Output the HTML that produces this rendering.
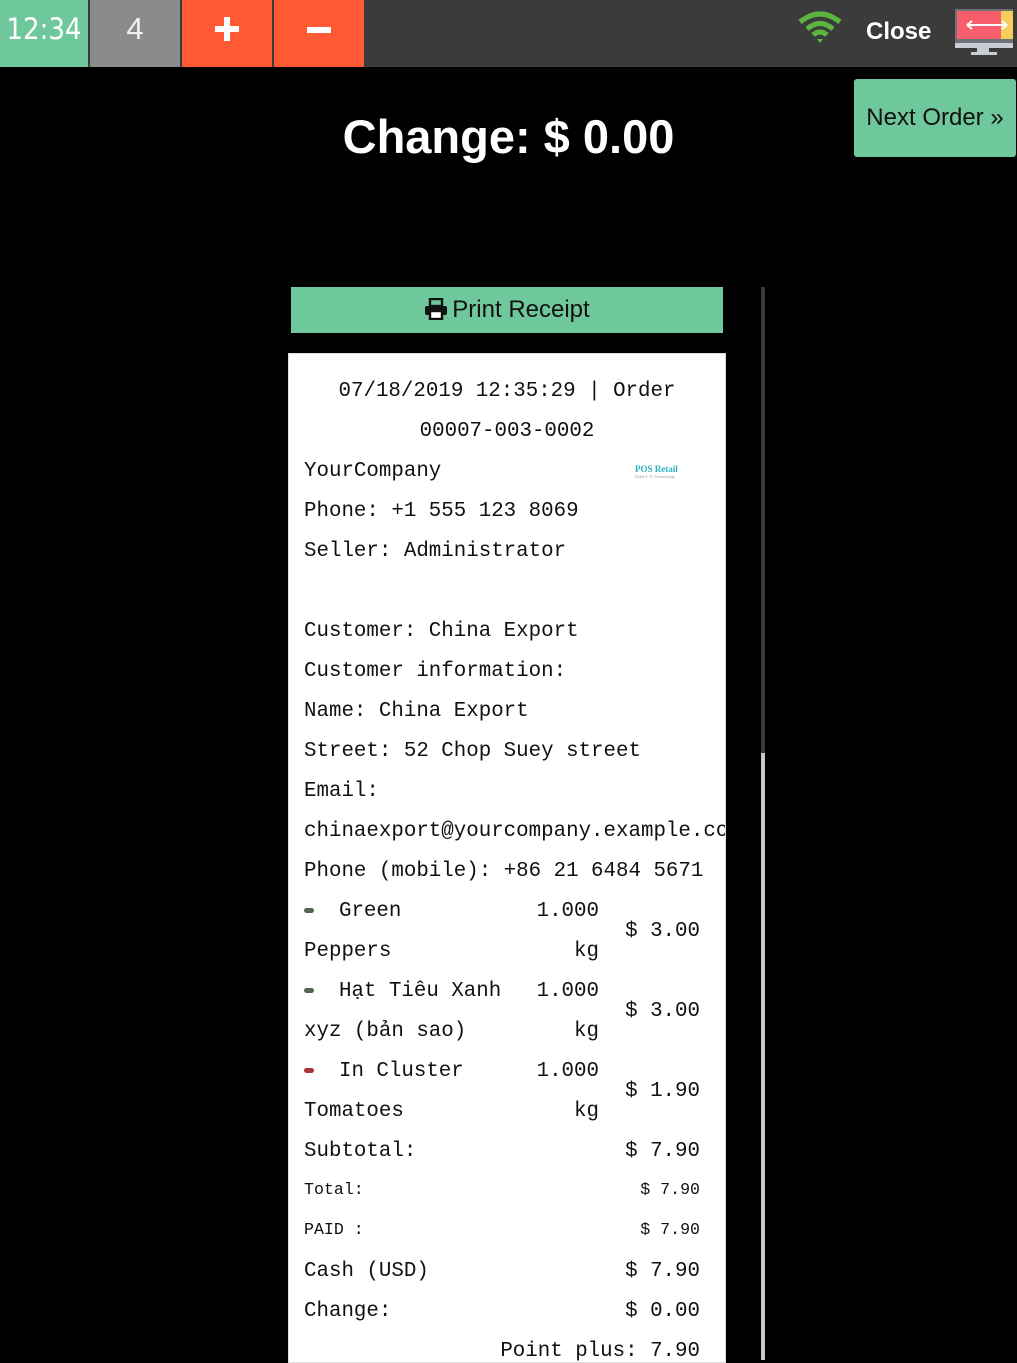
<!DOCTYPE html>
<html><head><meta charset="utf-8"><style>
*{margin:0;padding:0;box-sizing:border-box}
body{width:1017px;height:1360px;background:#000;position:relative;overflow:hidden;font-family:"Liberation Sans",sans-serif}
.a{position:absolute}
.bar{left:0;top:0;width:1017px;height:67px;background:#3b3b3b}
.m{position:absolute;font-family:"Liberation Mono",monospace;font-size:20.8px;line-height:40px;height:40px;color:#111;white-space:pre}
.s{font-size:16.6px}
.r{text-align:right}
.b{display:inline-block;width:10px;height:5px;border-radius:3px;vertical-align:3px}
</style></head><body>
<div class="a bar"></div>
<div class="a" style="left:0;top:0;width:88px;height:67px;background:#6fc89c;color:#fff;font-size:29px;line-height:58px;text-align:center;font-family:'DejaVu Sans Condensed','Liberation Sans',sans-serif;font-weight:300">12:34</div>
<div class="a" style="left:90px;top:0;width:90px;height:67px;background:#8b8b8b;color:#f0f0f0;font-size:31px;line-height:58px;text-align:center">4</div>
<div class="a" style="left:182px;top:0;width:90px;height:67px;background:#ff5a33"></div>
<div class="a" style="left:215px;top:26px;width:24px;height:6px;background:#fff"></div>
<div class="a" style="left:224px;top:17px;width:6px;height:24px;background:#fff"></div>
<div class="a" style="left:274px;top:0;width:90px;height:67px;background:#ff5a33"></div>
<div class="a" style="left:307px;top:27px;width:24px;height:6px;background:#fff"></div>
<svg class="a" style="left:798px;top:10px" width="44" height="34" viewBox="0 0 44 34">
<path d="M2 12 Q22 -4 42 12" stroke="#5cb53e" stroke-width="5" fill="none"/>
<path d="M9 19 Q22 8 35 19" stroke="#5cb53e" stroke-width="5" fill="none"/>
<path d="M15 25 Q22 19 29 25" stroke="#5cb53e" stroke-width="5" fill="none"/>
<path d="M19 29 L22 33 L25 29 Z" fill="#5cb53e"/></svg>
<div class="a" style="left:866px;top:18px;color:#fff;font-size:24px;font-weight:bold">Close</div>
<svg class="a" style="left:955px;top:8px" width="62" height="48" viewBox="0 0 62 48">
<rect x="0" y="1" width="58" height="34" fill="#6d7178"/>
<rect x="2" y="3" width="44" height="28" fill="#f85d6b"/>
<rect x="46" y="3" width="12" height="28" fill="#f6cc5d"/>
<path d="M12 17 H52 M12 17 l5 -4 M12 17 l5 4 M52 17 l-5 -4 M52 17 l-5 4" stroke="#fff" stroke-width="2" fill="none"/>
<rect x="0" y="35" width="58" height="5" fill="#c9cdd3"/>
<rect x="22" y="40" width="12" height="5" fill="#c9cdd3"/>
<rect x="16" y="44" width="26" height="3" fill="#c9cdd3"/></svg>
<div class="a" style="left:854px;top:79px;width:162px;height:78px;background:#6fc89c;border-radius:3px;color:#111;font-size:24px;line-height:78px;text-align:center">Next Order »</div>
<div class="a" style="left:0;width:1017px;top:109px;text-align:center;color:#fff;font-size:47px;font-weight:bold">Change: $ 0.00</div>
<div class="a" style="left:761px;top:287px;width:4px;height:1073px;background:#3a3a3a"></div>
<div class="a" style="left:761px;top:753px;width:4px;height:607px;background:#c8c8c8"></div>
<div class="a" style="left:291px;top:287px;width:432px;height:46px;background:#6fc89c;color:#111;font-size:24px;line-height:46px;text-align:center">
<svg width="24" height="22" viewBox="0 0 24 22" style="vertical-align:-3px;margin-right:4px"><rect x="6" y="1" width="12" height="7" fill="none" stroke="#111" stroke-width="2.4"/><rect x="1" y="8" width="22" height="9" rx="2" fill="#111"/><rect x="6" y="13" width="12" height="8" fill="#fff" stroke="#111" stroke-width="2.4"/></svg>Print Receipt</div>
<div class="a" style="left:288px;top:353px;width:438px;height:1010px;background:#fff;border:1px solid #ddd;overflow:hidden">
<div class="m" style="left:0;width:436px;top:18px;text-align:center">07/18/2019 12:35:29 | Order</div>
<div class="m" style="left:0;width:436px;top:58px;text-align:center">00007-003-0002</div>
<div class="m" style="left:15px;top:98px">YourCompany</div>
<div class="a" style="left:346px;top:110px;color:#2bb3c0;font:bold 9px 'Liberation Serif',serif">POS Retail</div>
<div class="a" style="left:346px;top:120px;color:#999;font-size:4px">2018 © TL Technology</div>
<div class="m" style="left:15px;top:138px">Phone: +1 555 123 8069</div>
<div class="m" style="left:15px;top:178px">Seller: Administrator</div>
<div class="m" style="left:15px;top:258px">Customer: China Export</div>
<div class="m" style="left:15px;top:298px">Customer information:</div>
<div class="m" style="left:15px;top:338px">Name: China Export</div>
<div class="m" style="left:15px;top:378px">Street: 52 Chop Suey street</div>
<div class="m" style="left:15px;top:418px">Email:</div>
<div class="m" style="left:15px;top:458px">chinaexport@yourcompany.example.com</div>
<div class="m" style="left:15px;top:498px">Phone (mobile): +86 21 6484 5671</div>
<div class="m" style="left:15px;top:538px"><span class="b" style="background:#565"></span>  Green</div>
<div class="m" style="left:15px;top:578px">Peppers</div>
<div class="m r" style="left:200px;width:110px;top:538px">1.000</div>
<div class="m r" style="left:200px;width:110px;top:578px">kg</div>
<div class="m r" style="left:300px;width:111px;top:558px">$ 3.00</div>
<div class="m" style="left:15px;top:618px"><span class="b" style="background:#565"></span>  Hạt Tiêu Xanh</div>
<div class="m" style="left:15px;top:658px">xyz (bản sao)</div>
<div class="m r" style="left:200px;width:110px;top:618px">1.000</div>
<div class="m r" style="left:200px;width:110px;top:658px">kg</div>
<div class="m r" style="left:300px;width:111px;top:638px">$ 3.00</div>
<div class="m" style="left:15px;top:698px"><span class="b" style="background:#a33"></span>  In Cluster</div>
<div class="m" style="left:15px;top:738px">Tomatoes</div>
<div class="m r" style="left:200px;width:110px;top:698px">1.000</div>
<div class="m r" style="left:200px;width:110px;top:738px">kg</div>
<div class="m r" style="left:300px;width:111px;top:718px">$ 1.90</div>
<div class="m" style="left:15px;top:778px">Subtotal:</div><div class="m r" style="left:200px;width:211px;top:778px">$ 7.90</div>
<div class="m s" style="left:15px;top:816px">Total:</div><div class="m s r" style="left:200px;width:211px;top:816px">$ 7.90</div>
<div class="m s" style="left:15px;top:856px">PAID :</div><div class="m s r" style="left:200px;width:211px;top:856px">$ 7.90</div>
<div class="m" style="left:15px;top:898px">Cash (USD)</div><div class="m r" style="left:200px;width:211px;top:898px">$ 7.90</div>
<div class="m" style="left:15px;top:938px">Change:</div><div class="m r" style="left:200px;width:211px;top:938px">$ 0.00</div>
<div class="m r" style="left:100px;width:311px;top:978px">Point plus: 7.90</div>
</div>
</body></html>
